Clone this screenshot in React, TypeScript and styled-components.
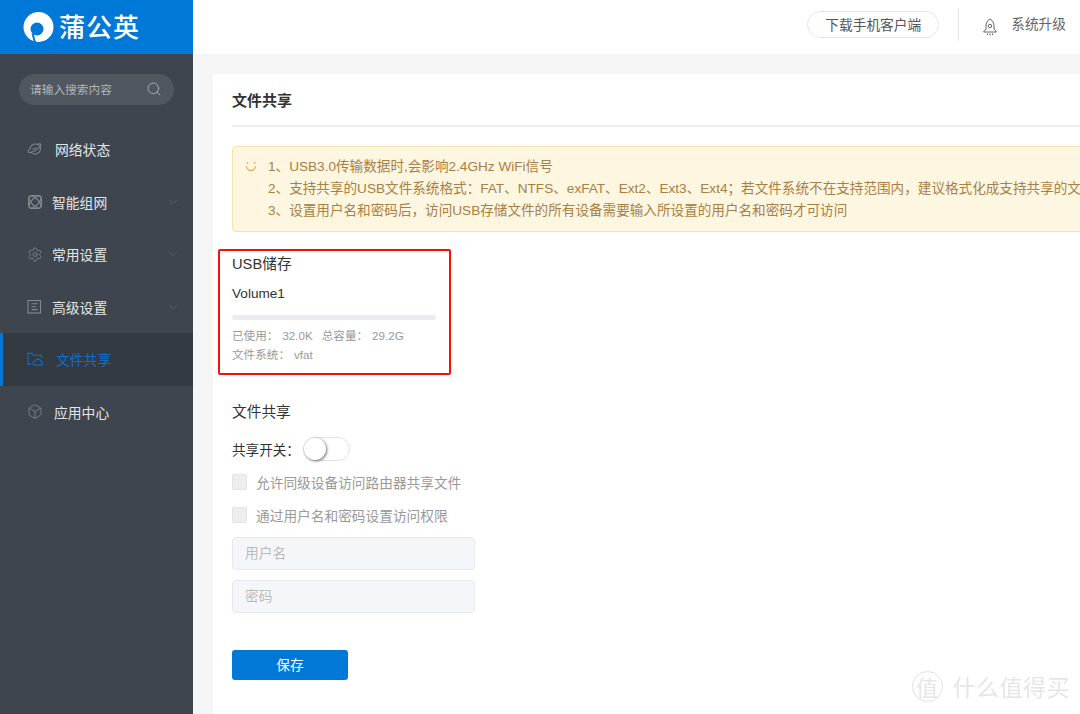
import React from 'react';
import styled, { createGlobalStyle } from 'styled-components';
import { ChevronDown, Search, Box, Settings } from 'lucide-react';

const GlobalStyle = createGlobalStyle`
  html, body { margin: 0; padding: 0; height: 100%; overflow: hidden; }
  body { font-family: "Liberation Sans", "Noto Sans CJK SC", sans-serif; }
  * { box-sizing: border-box; }
`;

const Page = styled.div`
  width: 1080px;
  height: 714px;
  display: flex;
  position: relative;
  overflow: hidden;
  background: #f5f5f5;
`;

const Sidebar = styled.aside`
  width: 193px;
  flex: none;
  background: #3e454e;
  display: flex;
  flex-direction: column;
`;

const Brand = styled.div`
  height: 54px;
  background: #0078d7;
  display: flex;
  align-items: center;
  padding-left: 23px;
  gap: 5px;
  color: #fff;
  font-size: 26px;
  font-weight: 500;
  letter-spacing: 1px;
`;

const BrandName = styled.span`
  padding-bottom: 4px;
`;

const SearchBox = styled.div`
  width: 155px;
  height: 31px;
  margin: 20px 0 0 19px;
  border-radius: 16px;
  background: #50575f;
  display: flex;
  align-items: center;
  justify-content: space-between;
  padding: 0 12px 2px 11px;
  color: #b0b3b7;
  font-size: 11.7px;
`;

const Menu = styled.nav`
  margin-top: 18px;
  display: flex;
  flex-direction: column;
`;

const MenuItem = styled.div<{ $active?: boolean; $textGap: number }>`
  height: 52.5px;
  display: flex;
  align-items: center;
  padding-left: ${p => (p.$active ? 24 : 27)}px;
  gap: ${p => p.$textGap}px;
  position: relative;
  font-size: 13.8px;
  color: ${p => (p.$active ? '#0d6fd0' : '#e3e5e7')};
  background: ${p => (p.$active ? '#343a42' : 'transparent')};
  border-left: ${p => (p.$active ? '3px solid #0078d7' : 'none')};
`;

const MenuArrow = styled.span`
  position: absolute;
  right: 13px;
  top: 50%;
  transform: translateY(-50%);
  display: flex;
  color: #5f666e;
`;

const MenuIcon = styled.span`
  width: 16px;
  height: 16px;
  display: flex;
  align-items: center;
  color: #85898e;
`;

const ActiveIcon = styled(MenuIcon)`
  color: #0d6fd0;
`;

const Main = styled.div`
  flex: 1;
  min-width: 0;
  display: flex;
  flex-direction: column;
`;

const TopBar = styled.header`
  height: 54px;
  flex: none;
  background: #fff;
  display: flex;
  align-items: center;
  justify-content: flex-end;
  padding: 0 14px 5px 0;
  font-size: 13.7px;
  color: #666;
`;

const DownloadButton = styled.div`
  width: 132px;
  height: 27px;
  padding-bottom: 2px;
  border: 1px solid #e6e6e6;
  border-radius: 14px;
  display: flex;
  align-items: center;
  justify-content: center;
  color: #555;
`;

const Divider = styled.div`
  width: 1px;
  height: 33px;
  margin: 0 23px 0 19px;
  background: #e6e6e6;
`;

const Upgrade = styled.div`
  display: flex;
  align-items: center;
  gap: 13px;
`;

const UpgradeText = styled.span`
  margin-bottom: 4px;
`;

const RocketSvg = styled.svg`
  margin-top: 4px;
`;

const Card = styled.main`
  flex: 1;
  width: 1000px;
  margin: 20px 0 0 20px;
  padding: 0 19px;
  background: #fff;
`;

const PageTitle = styled.h1`
  margin: 0;
  height: 53px;
  border-bottom: 2px solid #ececec;
  display: flex;
  align-items: center;
  font-size: 15px;
  font-weight: 700;
  color: #333;
`;

const Notice = styled.div`
  width: 1000px;
  height: 86px;
  margin-top: 19px;
  padding: 9px 0 0 12px;
  display: flex;
  gap: 11px;
  background: #fdf6e0;
  border: 1px solid #f6e1ae;
  border-radius: 4px;
  color: #a97f45;
  font-size: 13.6px;
  line-height: 22px;
  white-space: nowrap;
`;

const NoticeLines = styled.div`
  display: flex;
  flex-direction: column;
`;

const Smile = styled.svg`
  width: 12px;
  height: 12px;
  margin-top: 5px;
  flex: none;
`;

const UsbBox = styled.section`
  width: 233px;
  height: 126px;
  margin: 17px 0 0 -14px;
  padding: 3px 0 0 12px;
  border: 2px solid #f51010;
  border-radius: 2px;
`;

const SectionTitle = styled.h2`
  margin: 0;
  font-size: 14.7px;
  line-height: 20px;
  font-weight: 400;
  color: #333;
`;

const VolumeName = styled.div`
  margin-top: 11px;
  font-size: 13.6px;
  line-height: 18px;
  color: #333;
`;

const Bar = styled.div`
  width: 204px;
  height: 5px;
  margin-top: 12px;
  border-radius: 3px;
  background: #eaecf4;
`;

const Stats = styled.div`
  margin-top: 6px;
`;

const Stat = styled.div`
  display: flex;
  font-size: 11.6px;
  line-height: 19px;
  color: #999;
`;

const StatValue = styled.span`
  margin: 0 9px 0 4px;
`;

const ShareSection = styled.section`
  margin-top: 27px;
`;

const SwitchRow = styled.div`
  margin-top: 14px;
  height: 26px;
  display: flex;
  align-items: center;
  font-size: 13.6px;
  color: #333;
`;

const SwitchTrack = styled.div`
  width: 47px;
  height: 24px;
  margin-left: 3px;
  border: 1px solid #e2e2e2;
  border-radius: 12px;
  background: #fff;
  position: relative;
`;

const SwitchKnob = styled.div`
  position: absolute;
  left: 0;
  top: 0;
  width: 22px;
  height: 22px;
  border-radius: 50%;
  background: #fff;
  box-shadow: 1px 1px 3px rgba(0, 0, 0, 0.55);
`;

const CheckRow = styled.label<{ $top: number }>`
  margin-top: ${p => p.$top}px;
  height: 18px;
  display: flex;
  align-items: center;
  gap: 9px;
  font-size: 13.7px;
  color: #999;
`;

const CheckBox = styled.span`
  width: 15px;
  height: 16px;
  border: 1px solid #e4e4e4;
  border-radius: 2px;
  background: #eeeeee;
`;

const Field = styled.div<{ $top: number }>`
  width: 243px;
  height: 33px;
  margin-top: ${p => p.$top}px;
  padding: 0 0 4px 12px;
  display: flex;
  align-items: center;
  background: #f5f6fa;
  border: 1px solid #e8e9ee;
  border-radius: 4px;
  font-size: 13.7px;
  color: #bbb;
`;

const SaveButton = styled.div`
  width: 116px;
  height: 30px;
  margin-top: 37px;
  padding-bottom: 2px;
  display: flex;
  align-items: center;
  justify-content: center;
  background: #0078d7;
  border-radius: 3px;
  color: #fff;
  font-size: 13.7px;
`;

const Watermark = styled.div`
  position: absolute;
  right: 10px;
  bottom: 11px;
  display: flex;
  align-items: center;
  gap: 10px;
  font-size: 23px;
  letter-spacing: 0.5px;
  color: rgba(190, 190, 190, 0.4);
`;

const WatermarkBadge = styled.span`
  width: 31px;
  height: 31px;
  border: 1px solid rgba(190, 190, 190, 0.45);
  border-radius: 50%;
  display: flex;
  align-items: center;
  justify-content: center;
  font-size: 22px;
  letter-spacing: 0;
`;

const Logo = () => (
  <svg width="31" height="31" viewBox="0 0 31 31">
    <circle cx="15.5" cy="15" r="15" fill="#fff" />
    <circle cx="14" cy="17" r="6.500" fill="#0078d7" />
    <path d="M9.500 21.500L12 30.500" stroke="#0078d7" strokeWidth="2" />
  </svg>
);

const GlobeIcon = () => (
  <svg width="19" height="17" viewBox="0 0 19 17" fill="none" stroke="currentColor" strokeWidth="1.200">
    <path d="M4 6.500A6.300 6.300 0 0 1 16 6c.6 4.500-2.500 8-6.500 8A6 6 0 0 1 4.600 11.500" />
    <path d="M4.500 6.500C2 8.500 1 10.500 1.500 11.500c.8 1.300 5 .3 9-2.200s6.600-5.500 6-7c-.4-.7-1.800-.6-3.500 0" />
    <path d="M6.500 8c2 .3 3.800-.5 5-2.200" />
  </svg>
);

const MeshIcon = () => (
  <svg width="16" height="16" viewBox="0 0 16 16" fill="none" stroke="currentColor" strokeWidth="1.200">
    <rect x="1.500" y="1.500" width="13" height="13" rx="4" />
    <ellipse cx="8" cy="8" rx="8" ry="3.500" transform="rotate(45 8 8)" />
    <ellipse cx="8" cy="8" rx="8" ry="3.500" transform="rotate(-45 8 8)" />
  </svg>
);

const ListIcon = () => (
  <svg width="15" height="15" viewBox="0 0 15 15" fill="none" stroke="currentColor" strokeWidth="1.100">
    <rect x="1" y="1.500" width="12.500" height="12.500" />
    <path d="M4.500 4.800h6M4.500 7.700h4.500M4.500 10.600h6" />
  </svg>
);

const FolderCloudIcon = () => (
  <svg width="17" height="16" viewBox="0 0 17 16" fill="none" stroke="currentColor" strokeWidth="1.200">
    <path d="M4.500 13.500H1V2h4.500l1.500 2h8.500v3" />
    <path d="M8 14.500h6.500a2 2 0 0 0 .3-4 3 3 0 0 0-5.700-.5 2.300 2.300 0 0 0-1 4.500z" />
  </svg>
);

const RocketIcon = () => (
  <RocketSvg width="16" height="18" viewBox="0 0 16 18" fill="none" stroke="#666" strokeWidth="1">
    <path d="M8 1c3 1.500 4 4.500 4 7v3l2.500 3h-13L4 11V8c0-2.500 1-5.500 4-7z" />
    <circle cx="8" cy="8" r="1.700" />
    <path d="M5.500 15.500v1.500M8 15.500v2M10.500 15.500v1.500" />
  </RocketSvg>
);

const menu = [
  { label: '网络状态', icon: <GlobeIcon />, textGap: 12 },
  { label: '智能组网', icon: <MeshIcon />, textGap: 9, arrow: true },
  { label: '常用设置', icon: <Settings size={17} strokeWidth={1.2} />, textGap: 9, arrow: true },
  { label: '高级设置', icon: <ListIcon />, textGap: 9, arrow: true },
  { label: '文件共享', icon: <FolderCloudIcon />, textGap: 13, active: true },
  { label: '应用中心', icon: <Box size={17} strokeWidth={1.2} />, textGap: 11 },
];

const App: React.FC = () => {
  return (
    <Page>
      <GlobalStyle />
      <Sidebar>
        <Brand>
          <Logo />
          <BrandName>蒲公英</BrandName>
        </Brand>
        <SearchBox>
          请输入搜索内容
          <Search size={16} strokeWidth={1.3} color="#b5b8bb" />
        </SearchBox>
        <Menu>
          {menu.map(item => {
            const Icon = item.active ? ActiveIcon : MenuIcon;
            return (
              <MenuItem key={item.label} $active={item.active} $textGap={item.textGap}>
                <Icon>{item.icon}</Icon>
                {item.label}
                {item.arrow && (
                  <MenuArrow>
                    <ChevronDown size={14} strokeWidth={1.3} />
                  </MenuArrow>
                )}
              </MenuItem>
            );
          })}
        </Menu>
      </Sidebar>
      <Main>
        <TopBar>
          <DownloadButton>下载手机客户端</DownloadButton>
          <Divider />
          <Upgrade>
            <RocketIcon />
            <UpgradeText>系统升级</UpgradeText>
          </Upgrade>
        </TopBar>
        <Card>
          <PageTitle>文件共享</PageTitle>
          <Notice>
            <Smile viewBox="0 0 12 12" fill="none" stroke="#eeb05a" strokeWidth="1.300">
              <path d="M1.500 5a4.500 4.500 0 0 0 9 0" />
              <path d="M2.500 1v2M9.500 1v2" />
            </Smile>
            <NoticeLines>
              <div>1、USB3.0传输数据时,会影响2.4GHz WiFi信号</div>
              <div>2、支持共享的USB文件系统格式：FAT、NTFS、exFAT、Ext2、Ext3、Ext4；若文件系统不在支持范围内，建议格式化成支持共享的文件系统</div>
              <div>3、设置用户名和密码后，访问USB存储文件的所有设备需要输入所设置的用户名和密码才可访问</div>
            </NoticeLines>
          </Notice>
          <UsbBox>
            <SectionTitle>USB储存</SectionTitle>
            <VolumeName>Volume1</VolumeName>
            <Bar />
            <Stats>
              <Stat>
                已使用：
                <StatValue>32.0K</StatValue>
                总容量：
                <StatValue>29.2G</StatValue>
              </Stat>
              <Stat>
                文件系统：
                <StatValue>vfat</StatValue>
              </Stat>
            </Stats>
          </UsbBox>
          <ShareSection>
            <SectionTitle>文件共享</SectionTitle>
            <SwitchRow>
              共享开关：
              <SwitchTrack>
                <SwitchKnob />
              </SwitchTrack>
            </SwitchRow>
            <CheckRow $top={11}>
              <CheckBox />
              允许同级设备访问路由器共享文件
            </CheckRow>
            <CheckRow $top={15}>
              <CheckBox />
              通过用户名和密码设置访问权限
            </CheckRow>
            <Field $top={13}>用户名</Field>
            <Field $top={10}>密码</Field>
            <SaveButton>保存</SaveButton>
          </ShareSection>
        </Card>
      </Main>
      <Watermark>
        <WatermarkBadge>值</WatermarkBadge>
        什么值得买
      </Watermark>
    </Page>
  );
};

export default App;
